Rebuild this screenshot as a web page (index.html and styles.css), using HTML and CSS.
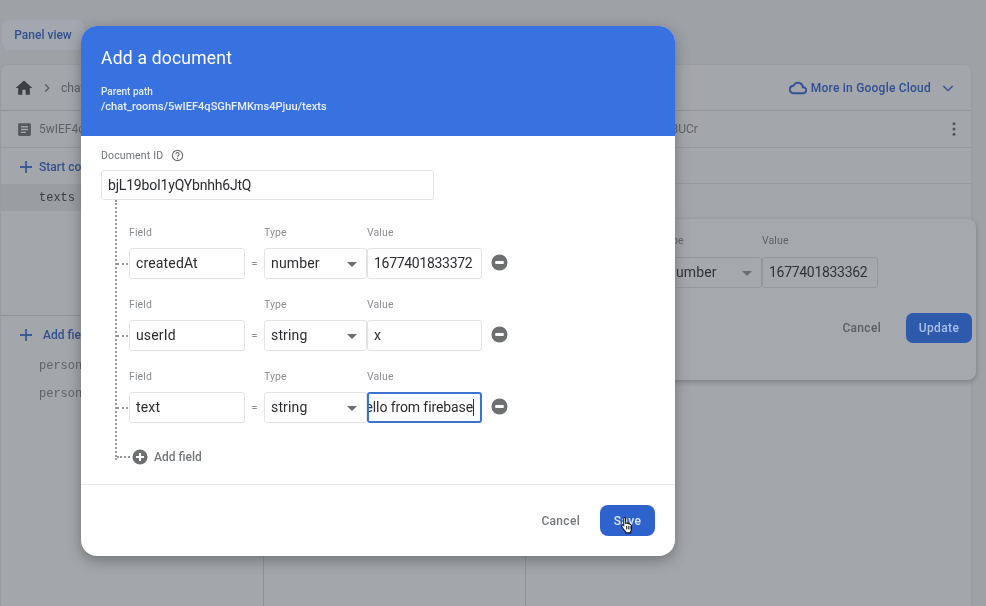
FILE: index.html
```html
<!DOCTYPE html>
<html lang="en">
<head>
<meta charset="utf-8">
<title>Add a document</title>
<link rel="stylesheet" href="styles.css">
</head>
<body>
<div class="page">
  <div class="toolbar"><span class="panel-btn">Panel view</span></div>
  <div class="card">
    <div class="crumbs">
      <svg class="home" viewBox="0 0 24 24"><path d="M10 20v-6h4v6h5v-8h3L12 3 2 12h3v8z"/></svg>
      <svg class="crumb-chev" viewBox="0 0 24 24"><path d="M9 6l6 6-6 6" fill="none" stroke="currentColor" stroke-width="2"/></svg>
      <span class="crumb-text">chat_rooms</span>
      <span class="cloud-link">
        <svg class="cloud" viewBox="0 0 24 24"><path d="M19.35 10.04A7.49 7.49 0 0 0 12 4C9.11 4 6.6 5.64 5.35 8.04A5.994 5.994 0 0 0 0 14c0 3.31 2.69 6 6 6h13c2.76 0 5-2.24 5-5 0-2.64-2.05-4.78-4.65-4.96zM19 18H6c-2.21 0-4-1.79-4-4s1.79-4 4-4h.71C7.37 7.69 9.48 6 12 6c3.04 0 5.5 2.46 5.5 5.5v.5H19c1.66 0 3 1.34 3 3s-1.34 3-3 3z"/></svg>
        More in Google Cloud
        <svg class="cloud-chev" viewBox="0 0 24 24"><path d="M5 9l7 7 7-7" fill="none" stroke="currentColor" stroke-width="2"/></svg>
      </span>
    </div>
    <div class="columns">
      <section class="col col-a">
        <div class="col-head">
          <svg class="doc" viewBox="0 0 24 24"><path d="M19 3H5a2 2 0 0 0-2 2v14a2 2 0 0 0 2 2h14a2 2 0 0 0 2-2V5a2 2 0 0 0-2-2zm-5 14H7v-2h7v2zm3-4H7v-2h10v2zm0-4H7V7h10v2z"/></svg>
          <span>5wIEF4qSGhFMKms4Pjuu</span>
        </div>
        <div class="action"><svg class="plus" viewBox="0 0 12 12"><path d="M6 0v12M0 6h12" fill="none" stroke="currentColor" stroke-width="1.800"/></svg>Start collection</div>
        <div class="mono selected">texts</div>
        <div class="spacer-a"></div>
        <div class="action action-b"><svg class="plus" viewBox="0 0 12 12"><path d="M6 0v12M0 6h12" fill="none" stroke="currentColor" stroke-width="1.800"/></svg>Add field</div>
        <div class="mono plain">person_1</div>
        <div class="mono plain">person_2</div>
      </section>
      <section class="col col-b"></section>
      <section class="col col-c">
        <div class="col-head col-head-c">
          <span>bjL19bol1yQYBUCr</span>
          <svg class="dots" viewBox="0 0 24 24"><circle cx="12" cy="5" r="2"/><circle cx="12" cy="12" r="2"/><circle cx="12" cy="19" r="2"/></svg>
        </div>
        <div class="blank-row"></div>
      </section>
    </div>
  </div>

  <div class="update-panel">
    <div class="up-grid">
      <span class="lbl">Type</span><span class="lbl">Value</span>
      <div class="box up-type">number<i class="caret"></i></div>
      <div class="box up-value digits">1677401833362</div>
    </div>
    <div class="up-actions">
      <span class="up-cancel">Cancel</span>
      <span class="up-update">Update</span>
    </div>
  </div>

  <div class="modal">
    <header class="modal-head">
      <h1>Add a document</h1>
      <div class="path-label">Parent path</div>
      <div class="path">/chat_rooms/5wIEF4qSGhFMKms4Pjuu/texts</div>
    </header>
    <div class="modal-body">
      <div class="id-label">Document ID
        <svg class="help" viewBox="0 0 24 24"><circle cx="12" cy="12" r="9.5" fill="none" stroke="currentColor" stroke-width="2"/><path d="M9 9.5a3 3 0 1 1 4.6 2.5c-1 .7-1.6 1.2-1.6 2.5" fill="none" stroke="currentColor" stroke-width="2"/><circle cx="12" cy="17.5" r="1.2" fill="currentColor"/></svg>
      </div>
      <div class="box id-box">bjL19boI1yQYbnhh6JtQ</div>
      <div class="tree">
        <div class="row">
          <span class="lbl">Field</span><span></span><span class="lbl">Type</span><span class="lbl">Value</span><span></span>
          <div class="box">createdAt</div><span class="eq">=</span><div class="box">number<i class="caret"></i></div><div class="box digits">1677401833372</div>
          <svg class="minus" viewBox="0 0 18 18"><circle cx="9" cy="9" r="8.5"/><rect x="4.5" y="7.5" width="9" height="3" rx="0.6" fill="#fff"/></svg>
        </div>
        <div class="row">
          <span class="lbl">Field</span><span></span><span class="lbl">Type</span><span class="lbl">Value</span><span></span>
          <div class="box">userId</div><span class="eq">=</span><div class="box">string<i class="caret"></i></div><div class="box">x</div>
          <svg class="minus" viewBox="0 0 18 18"><circle cx="9" cy="9" r="8.5"/><rect x="4.5" y="7.5" width="9" height="3" rx="0.6" fill="#fff"/></svg>
        </div>
        <div class="row">
          <span class="lbl">Field</span><span></span><span class="lbl">Type</span><span class="lbl">Value</span><span></span>
          <div class="box">text</div><span class="eq">=</span><div class="box">string<i class="caret"></i></div><div class="box focus"><span class="typed">Hello from firebase</span></div>
          <svg class="minus" viewBox="0 0 18 18"><circle cx="9" cy="9" r="8.5"/><rect x="4.5" y="7.5" width="9" height="3" rx="0.6" fill="#fff"/></svg>
        </div>
        <div class="add-field">
          <svg class="add-ic" viewBox="0 0 18 18"><circle cx="9" cy="9" r="8.5"/><path d="M9 4.5v9M4.5 9h9" stroke="#fff" stroke-width="2.2"/></svg>
          Add field
        </div>
      </div>
    </div>
    <footer class="modal-foot">
      <span class="cancel">Cancel</span>
      <span class="save">Save
        <svg class="pointer" viewBox="0 0 16 20"><path d="M5 1.5c.8 0 1.4.6 1.4 1.4v5l.6-.2c.6-.1 1 .1 1.3.5.6-.3 1.3-.1 1.6.5.7-.3 1.4 0 1.7.7l.4.1c.8.2 1.2.8 1.2 1.6v3.3c0 1.300-.5 2.300-1 3.100v1.500H6.500v-1.300C5.500 17 3.300 13.800 2.300 12.200c-.5-.8-.3-1.600.3-2 .6-.4 1.300-.2 1.700.3V2.900c0-.8 0-1.400.7-1.400z" fill="#fff" stroke="#111" stroke-width="1.200"/><path d="M7.500 11v4M9.500 11v4M11.500 11v4" stroke="#111"/></svg>
      </span>
    </footer>
  </div>
</div>
</body>
</html>
```
FILE: styles.css
```css
* { box-sizing: border-box; }
html, body { margin: 0; padding: 0; }
body { font-family: Roboto, "Liberation Sans", sans-serif; color: #202124; }
.page {
  position: relative; width: 986px; height: 606px; overflow: hidden;
  background: #9ea1a6; filter: blur(0.35px);
}
.toolbar { height: 64px; padding: 20px 0 0 2px; }
.panel-btn {
  display: inline-flex; align-items: center; justify-content: center;
  width: 82px; height: 30px; border-radius: 8px; background: #a3a8b0;
  color: #33508f; font-size: 12px; font-weight: 500;
}
.card {
  margin: 0 14px 0 0; height: 560px; background: #a3a6aa;
  border: 1px solid #989b9f; border-radius: 8px 8px 0 0;
}
.crumbs {
  display: flex; align-items: center; height: 46px; padding-left: 13px;
  border-bottom: 1px solid #909397; color: #5b5e62; font-size: 12px;
}
.home { width: 20px; height: 20px; fill: #3d4043; margin-right: 6px; }
.crumb-chev { width: 14px; height: 14px; color: #54575b; margin-right: 7px; }
.cloud-link {
  margin-left: auto; display: flex; align-items: center; color: #2f4f94;
  font-size: 12px; font-weight: 500; padding-right: 15px; letter-spacing: .22px;
}
.cloud { width: 18px; height: 18px; fill: #2f4f94; stroke: #2f4f94; stroke-width: .6; margin-right: 4px; }
.cloud-chev { width: 16px; height: 16px; margin-left: 9px; }
.columns { display: grid; grid-template-columns: 263px 262px 1fr; height: 500px; }
.col { border-right: 1px solid #8f9296; }
.col-c { border-right: 0; }
.col-head {
  display: flex; align-items: center; height: 37px; padding-left: 15px; gap: 6px;
  border-bottom: 1px solid #96999d; color: #5e6165; font-size: 12px;
}
.col-head-c { padding-left: 0; padding-right: 8px; justify-content: space-between; }
.col-head-c span { margin-left: 71px; }
.doc { width: 17px; height: 17px; fill: #55585c; }
.dots { width: 18px; height: 18px; fill: #505357; }
.action {
  display: flex; align-items: center; height: 36px; padding: 1px 0 0 19px;
  color: #33508f; font-size: 12px; font-weight: 500;
}
.plus { flex: none; width: 12px; height: 12px; margin-right: 7px; color: #3a5a9a; }
.mono {
  font-family: "Liberation Mono", "DejaVu Sans Mono", monospace; font-size: 12px;
  padding-left: 38px;
}
.selected { height: 27px; line-height: 28px; background: #9a9da1; color: #3a3d40; }
.spacer-a { height: 105px; border-bottom: 1px solid #909397; }
.action-b { height: 35px; padding-top: 2px; }
.action-b .plus { margin-right: 11px; }
.plain { height: 28px; line-height: 30px; color: #5e6165; }
.blank-row { height: 36px; border-bottom: 1px solid #96999d; }
.update-panel {
  position: absolute; left: 600px; top: 219px; width: 376px; height: 161px;
  background: #a5a8ac; border-radius: 8px; padding: 15px 4px 0 61px;
  box-shadow: 0 2px 5px rgba(60,64,67,.4);
}
.up-grid { display: grid; grid-template-columns: 101px 116px; grid-template-rows: 23px 30px; }
.up-grid .lbl { color: #5e6165; }
.update-panel .box { background: transparent; border-color: #94979b; color: #303336; }
.up-actions { display: flex; justify-content: flex-end; align-items: center; margin-top: 26px; }
.up-cancel { color: #5b5e62; font-size: 12px; font-weight: 500; margin-right: 25px; letter-spacing: .3px; }
.up-update {
  display: flex; align-items: center; justify-content: center; width: 66px; height: 30px;
  border-radius: 7px; background: #2d5aad; color: #a9c0e8; font-size: 12px; font-weight: 500; letter-spacing: .4px;
}
.modal {
  position: absolute; left: 81px; top: 26px; width: 594px; height: 530px;
  background: #fff; border-radius: 16px; overflow: hidden;
  box-shadow: 0 4px 14px rgba(50,53,56,.45);
  display: flex; flex-direction: column;
}
.modal-head { height: 110px; background: #3871e0; color: #fff; padding: 21px 20px 0; }
.modal-head h1 { margin: 0; font-size: 17.5px; line-height: 22px; font-weight: 400; letter-spacing: .22px; }
.path-label { margin-top: 16px; font-size: 10px; line-height: 14px; font-weight: 500; color: #e4ecfb; }
.path { font-size: 11.1px; line-height: 16px; font-weight: 500; color: #e9effc; }
.modal-body { flex: 1; padding: 12px 20px 0; }
.id-label { display: flex; align-items: center; gap: 8px; height: 14px; font-size: 10.5px; color: #707377; letter-spacing: .15px; }
.help { width: 13px; height: 13px; color: #6a6d71; }
.box {
  position: relative; display: flex; align-items: center; height: 31px; padding: 0 0 1px 6px;
  background: #fff; border: 1px solid #e1e3e5; border-radius: 3px;
  font-size: 14px; color: #2a2c2f; white-space: nowrap; overflow: hidden; letter-spacing: .15px;
}
.digits { letter-spacing: -.3px; }
.id-box { width: 333px; height: 30px; margin-top: 8px; letter-spacing: -.2px; }
.tree { position: relative; margin-left: 14px; height: 260px; padding: 25px 0 0 12px; border-left: 2px dotted #94979b; }
.row {
  position: relative; display: grid; grid-template-columns: 116px 19px 103px 115px 35px;
  grid-template-rows: 23px 31px; height: 72px; width: 388px;
}
.row .lbl { margin-top: 1px; }
.row::before {
  content: ""; position: absolute; left: -12px; top: 38px; width: 11px; border-top: 2px dotted #94979b;
}
.lbl { font-size: 10.5px; line-height: 14px; color: #8a8d91; letter-spacing: .1px; }
.eq { align-self: center; text-align: center; font-size: 11px; color: #8a8d91; }
.caret {
  position: absolute; right: 9px; top: 13px; width: 0; height: 0;
  border-left: 5px solid transparent; border-right: 5px solid transparent; border-top: 5px solid #6a6d71;
}
.box.focus { border: 2px solid #3d72cf; justify-content: flex-end; padding: 0 6px 1px 0; letter-spacing: -.1px; }
.typed { flex: none; border-right: 1px solid #333; line-height: 17px; }
.minus { width: 17px; height: 17px; justify-self: end; margin: 6px 9px 0 0; fill: #6d6f72; }
.add-field {
  position: relative; display: flex; align-items: center; gap: 6px; margin: 7px 0 0 3px;
  height: 17px; font-size: 12px; font-weight: 500; color: #75787b;
}
.add-field::before {
  content: ""; position: absolute; left: -15px; top: 8px; width: 13px; border-top: 2px dotted #94979b;
}
.add-ic { width: 16px; height: 16px; fill: #6d6f72; }
.modal-foot {
  height: 72px; border-top: 1px solid #e8eaec; display: flex; align-items: center;
  justify-content: flex-end; padding: 0 20px 0 0;
}
.cancel { font-size: 12px; font-weight: 500; color: #75787b; margin-right: 20px; letter-spacing: .3px; }
.save {
  position: relative; display: flex; align-items: center; justify-content: center;
  width: 55px; height: 31px; border-radius: 8px; background: #2e62cd; color: #dfe8f8;
  font-size: 12px; font-weight: 500; letter-spacing: .4px;
}
.pointer { position: absolute; left: 20px; top: 11px; width: 14px; height: 18px; }
```
